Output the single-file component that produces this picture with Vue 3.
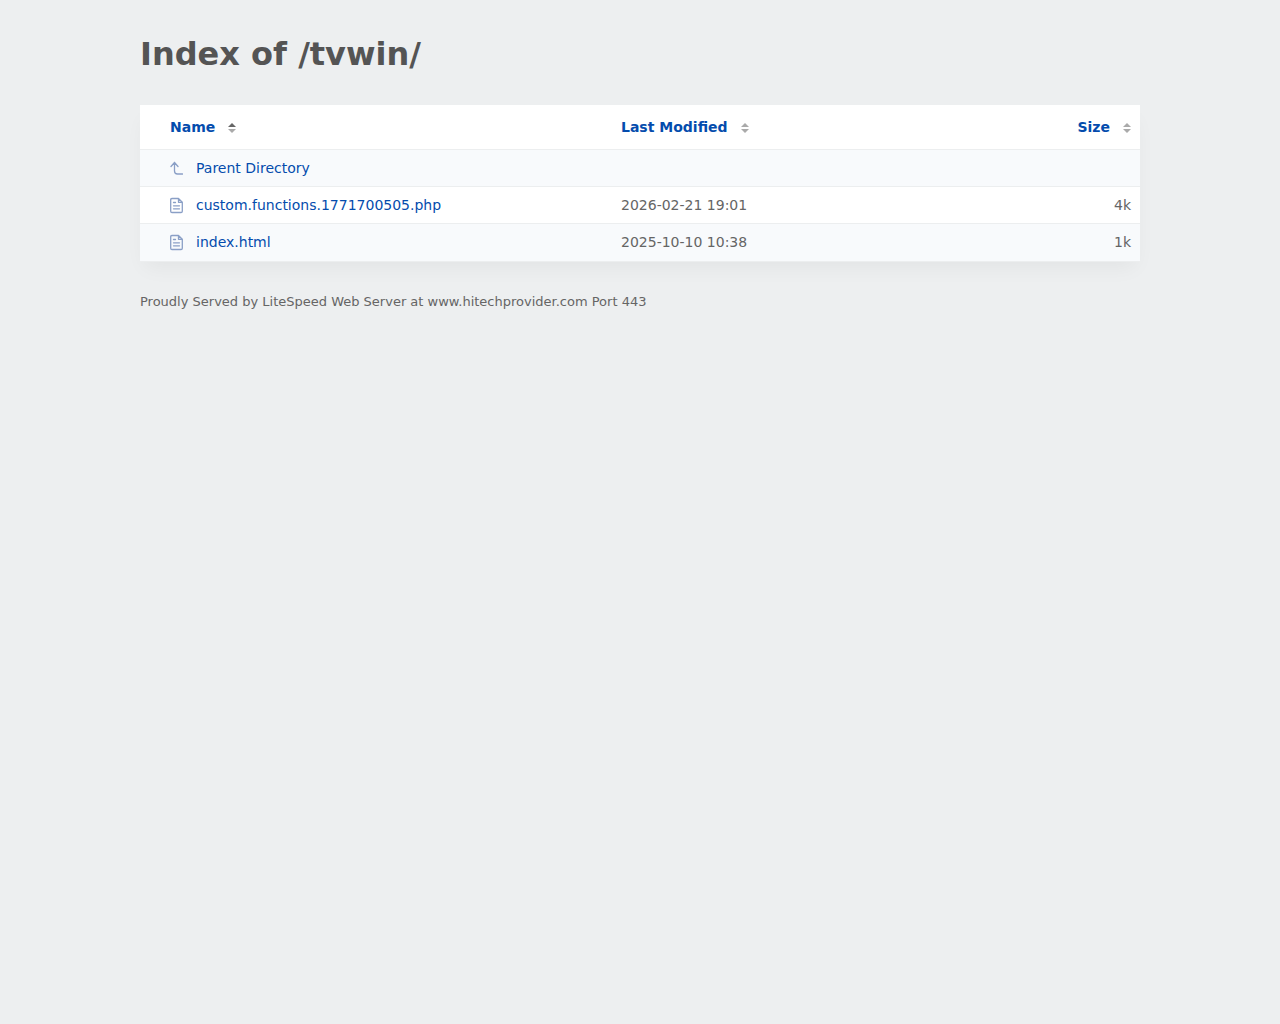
<script setup>
const columns = [
  { key: 'name', label: 'Name', sorted: true },
  { key: 'modified', label: 'Last Modified', sorted: false },
  { key: 'size', label: 'Size', sorted: false },
]
const rows = [
  { name: 'Parent Directory', modified: '', size: '', up: true },
  { name: 'custom.functions.1771700505.php', modified: '2026-02-21 19:01', size: '4k' },
  { name: 'index.html', modified: '2025-10-10 10:38', size: '1k' },
]
</script>

<template>
  <main class="content">
    <h1>Index of /tvwin/</h1>
    <table class="listing">
      <thead>
        <tr>
          <th v-for="c in columns" :key="c.key" :class="c.key" :aria-sort="c.sorted ? 'ascending' : 'none'">
            <button type="button" class="sort">
              {{ c.label }}
              <svg class="arrows" width="8" height="12" viewBox="0 0 8 12" aria-hidden="true">
                <path d="M0 6 4 2l4 4z" :fill="c.sorted ? '#666' : '#aaa'" />
                <path d="M0 8h8l-4 4z" fill="#aaa" />
              </svg>
            </button>
          </th>
        </tr>
      </thead>
      <tbody>
        <tr v-for="r in rows" :key="r.name">
          <td class="name">
            <a href="#">
              <svg v-if="r.up" class="icon" width="13" height="18" viewBox="0 0 13 18" aria-hidden="true">
                <path d="M1 7.500l3.500-4 3.500 4M4.500 3.500V12q0 3 3 3H12.500" />
              </svg>
              <svg v-else class="icon" width="13" height="18" viewBox="0 0 13 18" aria-hidden="true">
                <path d="M8.500 2.500H2Q.7 2.500 .7 3.800v11.400Q.7 16.500 2 16.500h9q1.300 0 1.300-1.300V6.300zM8.500 2.500v3.800h3.800M3.500 6.500h2M3.500 9.800h6M3.500 12.800h6" />
              </svg>
              {{ r.name }}
            </a>
          </td>
          <td class="modified">{{ r.modified }}</td>
          <td class="size">{{ r.size }}</td>
        </tr>
      </tbody>
    </table>
    <footer>Proudly Served by LiteSpeed Web Server at www.hitechprovider.com Port 443</footer>
  </main>
</template>

<style>
body {
  background: #edeff0;
}
</style>

<style scoped>
.content {
  box-sizing: border-box;
  max-width: 1040px;
  margin: 0 auto;
  padding: 32px 20px;
  color: #656565;
  font: 14px/20px "DejaVu Sans", sans-serif;
}
h1 {
  margin: 0 0 29px;
  color: #545454;
  font-size: 32px;
  line-height: 44px;
}
.listing {
  width: 100%;
  background: #fff;
  border-collapse: collapse;
  table-layout: fixed;
  box-shadow: 0 10px 20px -5px rgba(0, 0, 0, 0.05);
}
th,
td {
  box-sizing: border-box;
  padding: 8px 9px;
  border-bottom: 1px solid #eceeef;
  text-align: left;
}
th {
  padding-top: 12px;
  padding-bottom: 12px;
}
.name {
  width: 472px;
  padding-left: 30px;
}
.size {
  text-align: right;
}
tbody tr:nth-child(odd) {
  background: #f8fafc;
}
tbody tr:last-child td {
  padding-bottom: 9px;
}
.sort {
  display: inline-flex;
  align-items: center;
  gap: 13px;
  padding: 0;
  border: 0;
  background: none;
  color: #044cad;
  font: inherit;
  cursor: pointer;
}
td a {
  display: flex;
  align-items: center;
  gap: 13px;
  color: #044cad;
  text-decoration: none;
}
.icon {
  fill: none;
  stroke: #8a9fc6;
  stroke-width: 1.3;
  stroke-linecap: round;
  stroke-linejoin: round;
}
footer {
  margin-top: 30px;
  font-size: 13px;
}
</style>
